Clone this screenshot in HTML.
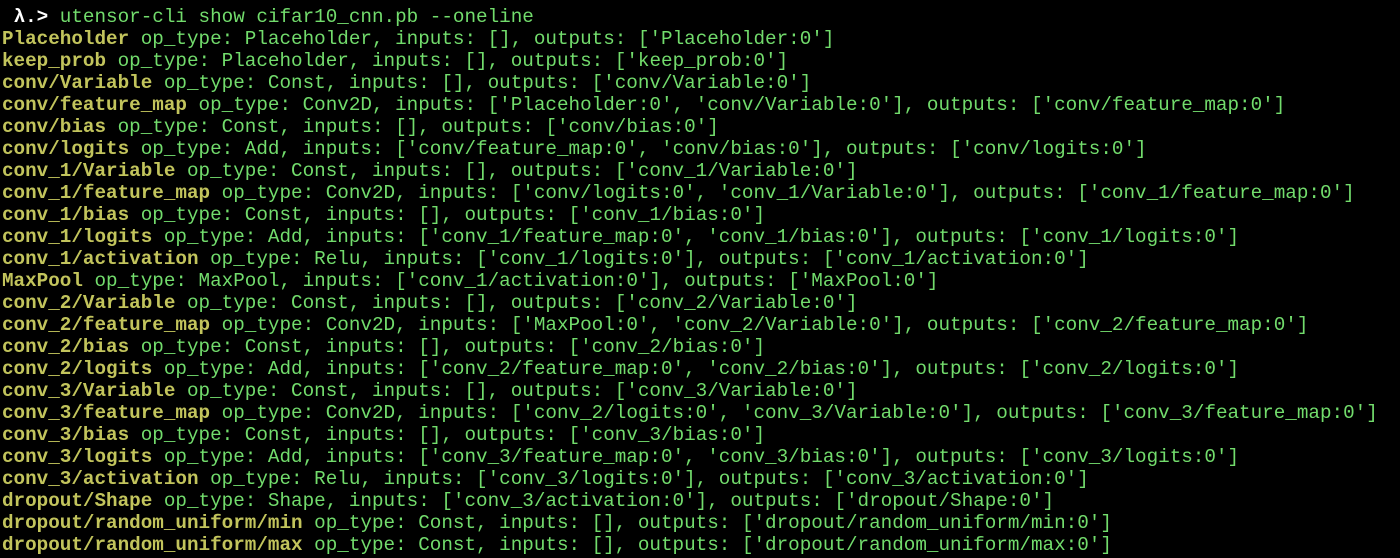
<!DOCTYPE html>
<html><head><meta charset="utf-8"><style>
html,body{margin:0;padding:0;background:#000;width:1400px;height:558px;overflow:hidden}
pre{margin:0;padding:6px 0 0 2px;font-family:"Liberation Mono","DejaVu Sans Mono",monospace;font-size:19.28px;line-height:22px;color:#72dc6c;white-space:pre}
b{color:#c2c45c;font-weight:bold}
.p{color:#fff;font-weight:bold}
</style></head><body><pre> <span class="p">λ.&gt;</span> utensor-cli show cifar10_cnn.pb --oneline
<b>Placeholder</b> op_type: Placeholder, inputs: [], outputs: ['Placeholder:0']
<b>keep_prob</b> op_type: Placeholder, inputs: [], outputs: ['keep_prob:0']
<b>conv/Variable</b> op_type: Const, inputs: [], outputs: ['conv/Variable:0']
<b>conv/feature_map</b> op_type: Conv2D, inputs: ['Placeholder:0', 'conv/Variable:0'], outputs: ['conv/feature_map:0']
<b>conv/bias</b> op_type: Const, inputs: [], outputs: ['conv/bias:0']
<b>conv/logits</b> op_type: Add, inputs: ['conv/feature_map:0', 'conv/bias:0'], outputs: ['conv/logits:0']
<b>conv_1/Variable</b> op_type: Const, inputs: [], outputs: ['conv_1/Variable:0']
<b>conv_1/feature_map</b> op_type: Conv2D, inputs: ['conv/logits:0', 'conv_1/Variable:0'], outputs: ['conv_1/feature_map:0']
<b>conv_1/bias</b> op_type: Const, inputs: [], outputs: ['conv_1/bias:0']
<b>conv_1/logits</b> op_type: Add, inputs: ['conv_1/feature_map:0', 'conv_1/bias:0'], outputs: ['conv_1/logits:0']
<b>conv_1/activation</b> op_type: Relu, inputs: ['conv_1/logits:0'], outputs: ['conv_1/activation:0']
<b>MaxPool</b> op_type: MaxPool, inputs: ['conv_1/activation:0'], outputs: ['MaxPool:0']
<b>conv_2/Variable</b> op_type: Const, inputs: [], outputs: ['conv_2/Variable:0']
<b>conv_2/feature_map</b> op_type: Conv2D, inputs: ['MaxPool:0', 'conv_2/Variable:0'], outputs: ['conv_2/feature_map:0']
<b>conv_2/bias</b> op_type: Const, inputs: [], outputs: ['conv_2/bias:0']
<b>conv_2/logits</b> op_type: Add, inputs: ['conv_2/feature_map:0', 'conv_2/bias:0'], outputs: ['conv_2/logits:0']
<b>conv_3/Variable</b> op_type: Const, inputs: [], outputs: ['conv_3/Variable:0']
<b>conv_3/feature_map</b> op_type: Conv2D, inputs: ['conv_2/logits:0', 'conv_3/Variable:0'], outputs: ['conv_3/feature_map:0']
<b>conv_3/bias</b> op_type: Const, inputs: [], outputs: ['conv_3/bias:0']
<b>conv_3/logits</b> op_type: Add, inputs: ['conv_3/feature_map:0', 'conv_3/bias:0'], outputs: ['conv_3/logits:0']
<b>conv_3/activation</b> op_type: Relu, inputs: ['conv_3/logits:0'], outputs: ['conv_3/activation:0']
<b>dropout/Shape</b> op_type: Shape, inputs: ['conv_3/activation:0'], outputs: ['dropout/Shape:0']
<b>dropout/random_uniform/min</b> op_type: Const, inputs: [], outputs: ['dropout/random_uniform/min:0']
<b>dropout/random_uniform/max</b> op_type: Const, inputs: [], outputs: ['dropout/random_uniform/max:0']</pre></body></html>
